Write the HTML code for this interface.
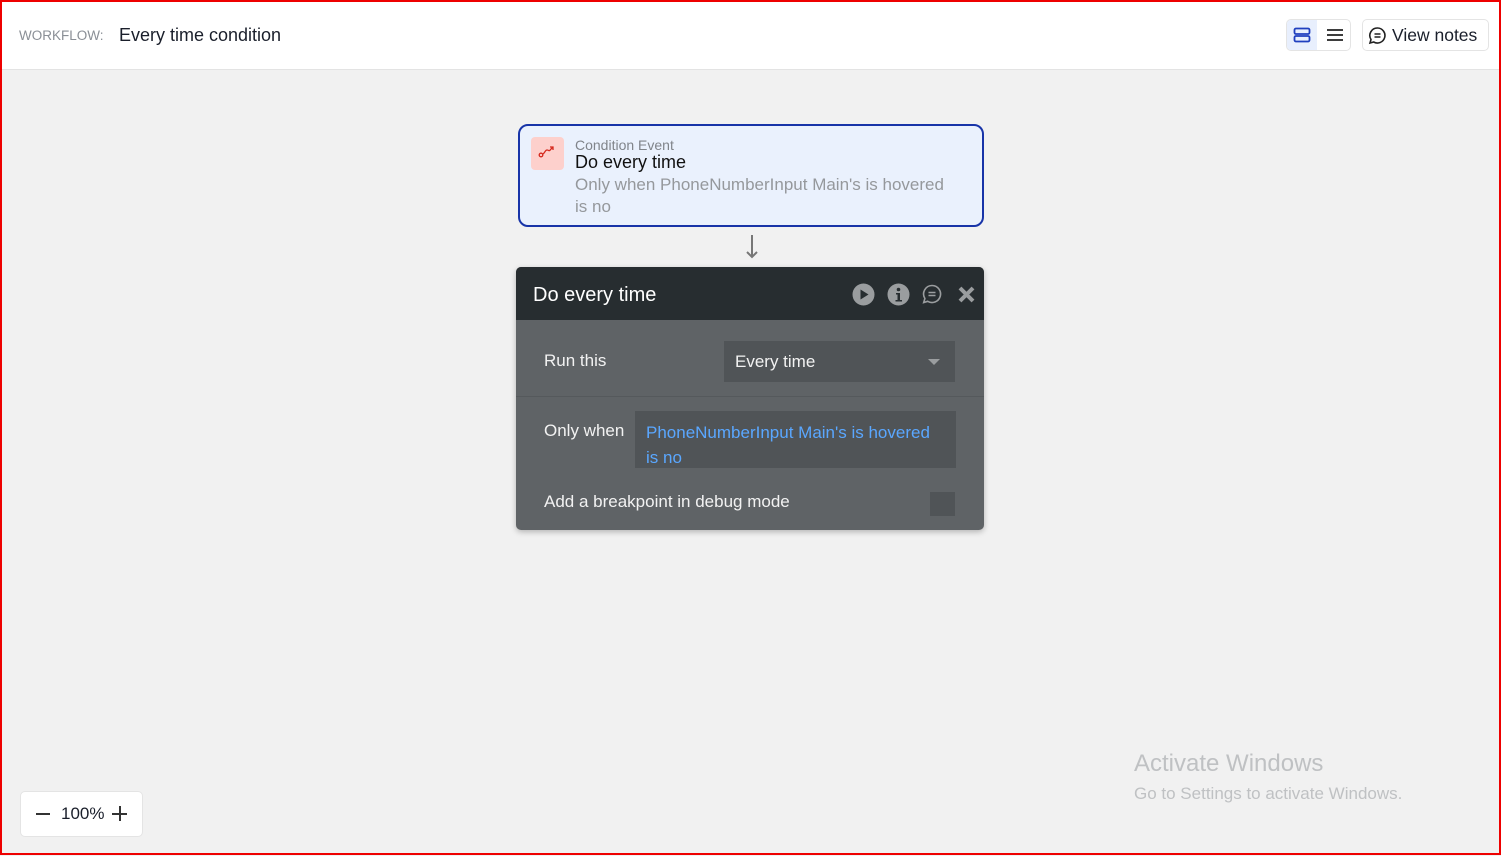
<!DOCTYPE html>
<html><head><style>
*{box-sizing:border-box;margin:0;padding:0}
body{width:1501px;height:856px;overflow:hidden;background:#f1f1f1;font-family:"Liberation Sans",sans-serif;position:relative}
.frame{position:absolute;left:0;top:0;width:1501px;height:855px;border:2px solid #e00;pointer-events:none;z-index:10}
.top{position:absolute;left:0;top:0;width:1501px;height:70px;background:#fff;border-bottom:1px solid #e3e3e3}
.abs{position:absolute;white-space:nowrap}
</style></head><body>
<div class="top">
 <div class="abs" style="left:19px;top:28px;font-size:13.5px;color:#8a8f96">WORKFLOW:</div>
 <div class="abs" style="left:119px;top:25px;font-size:18px;color:#1a1f2b">Every time condition</div>
 <div class="abs" style="left:1286px;top:19px;width:65px;height:32px;border:1px solid #e4e4e4;border-radius:5px;background:#fff"></div>
 <div class="abs" style="left:1287px;top:20px;width:30px;height:30px;background:#e8effd;border-radius:4px 0 0 4px"></div>
 <svg class="abs" style="left:1293px;top:27px" width="18" height="16"><rect x="1.5" y="1.5" width="15" height="5.5" rx="1.5" fill="none" stroke="#1f3fbf" stroke-width="1.8"/><rect x="1.5" y="9" width="15" height="5.5" rx="1.5" fill="none" stroke="#1f3fbf" stroke-width="1.8"/></svg>
 <svg class="abs" style="left:1326px;top:28px" width="18" height="14"><path d="M1 2h16M1 7h16M1 12h16" stroke="#222" stroke-width="1.8"/></svg>
 <div class="abs" style="left:1362px;top:19px;width:127px;height:32px;border:1px solid #e4e4e4;border-radius:5px;background:#fff"></div>
 <svg class="abs" style="left:1368px;top:26px" width="19" height="19"><path d="M9.5 2a7.5 7.5 0 1 1-3.8 14L2 17l1-3.5A7.5 7.5 0 0 1 9.5 2z" fill="none" stroke="#222" stroke-width="1.6"/><path d="M6.5 8h6M6.5 11h6" stroke="#222" stroke-width="1.5"/></svg>
 <div class="abs" style="left:1392px;top:25px;font-size:17.5px;color:#1a1f2b">View notes</div>
</div>

<div class="abs" style="left:518px;top:124px;width:466px;height:103px;background:#eaf1fd;border:2px solid #1834a8;border-radius:10px"></div>
<div class="abs" style="left:531px;top:137px;width:33px;height:33px;background:#fdd0cc;border-radius:4px"></div>
<svg class="abs" style="left:538px;top:145px" width="18" height="14"><circle cx="3" cy="10" r="1.8" fill="none" stroke="#d52a1e" stroke-width="1.3"/><path d="M5 9c2-1 2-4 4-4s2 2 4-1l2-2M12 2h3v3" fill="none" stroke="#d52a1e" stroke-width="1.3"/></svg>
<div class="abs" style="left:575px;top:137px;font-size:14px;color:#80848a">Condition Event</div>
<div class="abs" style="left:575px;top:152px;font-size:18px;color:#111">Do every time</div>
<div class="abs" style="left:575px;top:174px;font-size:17px;color:#95989c;line-height:22px;white-space:normal;width:385px">Only when PhoneNumberInput Main's is hovered is no</div>

<svg class="abs" style="left:744px;top:234px" width="16" height="26"><path d="M8 1v22M3 18l5 5 5-5" fill="none" stroke="#777" stroke-width="2"/></svg>

<div class="abs" style="left:516px;top:267px;width:468px;height:263px;background:#5f6366;border-radius:5px;overflow:hidden;box-shadow:0 2px 6px rgba(0,0,0,.25)">
 <div style="height:53px;background:#272d30"></div>
 <div style="position:absolute;left:0;top:129px;width:468px;height:1px;background:#55595c"></div>
</div>
<div class="abs" style="left:533px;top:284px;font-size:20px;color:#fff">Do every time</div>
<svg class="abs" style="left:852px;top:283px" width="23" height="23"><circle cx="11.5" cy="11.5" r="11" fill="#9a9d9f"/><path d="M8.5 6.5v10l8-5z" fill="#272d30"/></svg>
<svg class="abs" style="left:887px;top:283px" width="23" height="23"><circle cx="11.5" cy="11.5" r="11" fill="#9a9d9f"/><circle cx="11.5" cy="6.5" r="1.8" fill="#272d30"/><path d="M9 10h4v7h2v1.5H8.5V17h2v-5.5H9z" fill="#272d30"/></svg>
<svg class="abs" style="left:922px;top:284px" width="20" height="20"><path d="M10 1.5a8.5 8.5 0 1 1-4.3 15.8L1.7 18.5l1.2-4A8.5 8.5 0 0 1 10 1.5z" fill="none" stroke="#9a9d9f" stroke-width="1.6"/><path d="M6.5 8.5h7M6.5 11.5h7" stroke="#9a9d9f" stroke-width="1.5"/></svg>
<svg class="abs" style="left:957px;top:285px" width="19" height="19"><path d="M3 3l13 13M16 3L3 16" stroke="#9a9d9f" stroke-width="4"/></svg>

<div class="abs" style="left:544px;top:351px;font-size:17px;color:#f2f2f2">Run this</div>
<div class="abs" style="left:724px;top:341px;width:231px;height:41px;background:#505457"></div>
<div class="abs" style="left:735px;top:352px;font-size:17px;color:#f2f2f2">Every time</div>
<div class="abs" style="left:928px;top:359px;width:0;height:0;border-left:6px solid transparent;border-right:6px solid transparent;border-top:6px solid #9a9d9f"></div>

<div class="abs" style="left:544px;top:421px;font-size:17px;color:#f2f2f2">Only when</div>
<div class="abs" style="left:635px;top:411px;width:321px;height:57px;background:#505457"></div>
<div class="abs" style="left:646px;top:420px;font-size:17px;color:#5aa7ff;line-height:25px;white-space:normal;width:298px">PhoneNumberInput Main's is hovered is no</div>

<div class="abs" style="left:544px;top:492px;font-size:17px;color:#f2f2f2">Add a breakpoint in debug mode</div>
<div class="abs" style="left:930px;top:492px;width:25px;height:24px;background:#505457"></div>

<div class="abs" style="left:1134px;top:750px;font-size:24px;color:#bfc1c3">Activate Windows</div>
<div class="abs" style="left:1134px;top:784px;font-size:17px;color:#bfc1c3">Go to Settings to activate Windows.</div>

<div class="abs" style="left:20px;top:791px;width:123px;height:46px;background:#fff;border:1px solid #e4e4e4;border-radius:5px"></div>
<div class="abs" style="left:36px;top:813px;width:14px;height:2px;background:#333"></div>
<div class="abs" style="left:61px;top:804px;font-size:17px;color:#1a1f2b">100%</div>
<div class="abs" style="left:112px;top:813px;width:15px;height:2px;background:#333"></div>
<div class="abs" style="left:119px;top:806px;width:2px;height:15px;background:#333"></div>

<div class="frame"></div>
</body></html>
